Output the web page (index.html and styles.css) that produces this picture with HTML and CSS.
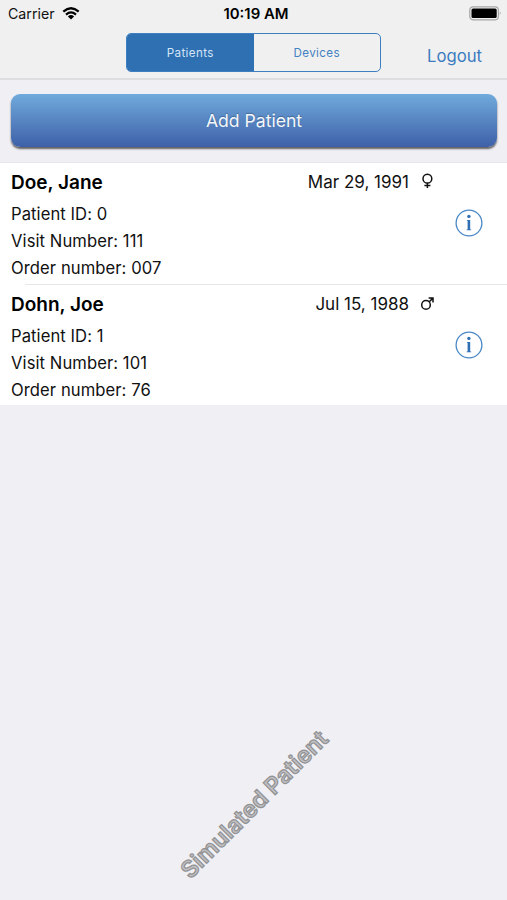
FILE: index.html
```html
<!DOCTYPE html>
<html lang="en">
<head>
    <meta charset="UTF-8">
    <meta name="viewport" content="width=device-width, initial-scale=1.0">
    <title>Patients</title>
    <link rel="stylesheet" href="styles.css">
</head>
<body>

<header class="header">
    <div class="status-bar">
        <div class="carrier">
            <span>Carrier</span>
            <svg class="wifi" viewBox="0 0 18 13" width="18" height="13">
                <path d="M1.3 4.6 Q9 -2.1 16.7 4.6 M4 7.6 Q9 3.3 14 7.6" fill="none" stroke="#000" stroke-width="2.2"/>
                <path d="M5.9 9.4 Q9 6.8 12.1 9.4 L9 12.6 Z"/>
            </svg>
        </div>
        <span class="time">10:19 AM</span>
        <svg class="battery" viewBox="0 0 33 15" width="33" height="15">
            <rect x="0.8" y="0.8" width="28.6" height="13" rx="3.2" fill="none" stroke="#a5a5a5" stroke-width="1.2"/>
            <rect x="2.5" y="2.5" width="25.2" height="9.6" rx="1.6"/>
            <path d="M30.8 5.2 Q32.6 7.3 30.8 9.4 Z" fill="#8a8a8a"/>
        </svg>
    </div>
    <nav class="nav-bar">
        <div class="segments">
            <a class="segment active">Patients</a>
            <a class="segment">Devices</a>
        </div>
        <a class="logout">Logout</a>
    </nav>
</header>

<div class="actions">
    <button class="add-patient">Add Patient</button>
</div>

<ul class="patient-list">
    <li class="patient">
        <div class="details">
            <h2 class="name">Doe, Jane</h2>
            <p>Patient ID: 0</p>
            <p>Visit Number: 111</p>
            <p>Order number: 007</p>
        </div>
        <span class="birthday">Mar 29, 1991</span>
        <svg class="gender" viewBox="0 0 14 16" width="14" height="16">
            <path d="M7.4 10 V15 M4.4 12.6 H10.4" fill="none" stroke="#111" stroke-width="1.5"/>
            <circle cx="7.4" cy="5.7" r="4.4" fill="none" stroke="#111" stroke-width="1.5"/>
        </svg>
        <svg class="info" viewBox="0 0 28 28" width="28" height="28">
            <circle cx="14" cy="14" r="12.9" fill="none" stroke="#4a88c6" stroke-width="1.3"/>
            <circle cx="13.9" cy="7.4" r="1.7" fill="#2f70b5"/>
            <path d="M11.9 10.9 H15.2 V20.4 H16.2 V21.3 H11.6 V20.4 H12.6 V11.8 H11.9 Z" fill="#2f70b5"/>
        </svg>
    </li>
    <li class="patient">
        <div class="details">
            <h2 class="name">Dohn, Joe</h2>
            <p>Patient ID: 1</p>
            <p>Visit Number: 101</p>
            <p>Order number: 76</p>
        </div>
        <span class="birthday">Jul 15, 1988</span>
        <svg class="gender" viewBox="0 0 14 16" width="14" height="16">
            <path d="M9.3 6.7 L12.6 3.4 M8.6 3.1 H13 V7.5" fill="none" stroke="#111" stroke-width="1.5"/>
            <circle cx="6" cy="9.9" r="4.3" fill="none" stroke="#111" stroke-width="1.5"/>
        </svg>
        <svg class="info" viewBox="0 0 28 28" width="28" height="28">
            <circle cx="14" cy="14" r="12.9" fill="none" stroke="#4a88c6" stroke-width="1.3"/>
            <circle cx="13.9" cy="7.4" r="1.7" fill="#2f70b5"/>
            <path d="M11.9 10.9 H15.2 V20.4 H16.2 V21.3 H11.6 V20.4 H12.6 V11.8 H11.9 Z" fill="#2f70b5"/>
        </svg>
    </li>
</ul>

<div class="watermark">Simulated Patient</div>

</body>
</html>
```
FILE: styles.css
```css
* {
    box-sizing: border-box;
}
body {
    position: relative;
    height: 900px;
    margin: 0;
    overflow: hidden;
    font-family: Inter, "Liberation Sans", sans-serif;
    font-size: 16.6px;
    background-color: #efeff4;
    color: #111;
}
.header {
    height: 80px;
    background-color: #f0f0f0;
    border-bottom: 2px solid #dddddf;
}
.status-bar {
    display: grid;
    grid-template-columns: 1fr auto 1fr;
    align-items: center;
    height: 27px;
    padding: 0 5px 0 8px;
}
.carrier {
    display: flex;
    align-items: center;
    gap: 7px;
    font-size: 14.2px;
}
.time {
    padding-left: 2px;
    font-size: 14.9px;
    font-weight: 600;
    color: #000;
}
.battery {
    justify-self: end;
}
.nav-bar {
    display: grid;
    grid-template-columns: 1fr 255px 1fr;
    padding-top: 6px;
}
.segments {
    grid-column: 2;
    display: flex;
    height: 39px;
    border: 1.5px solid #3d7fc1;
    border-radius: 5px;
    overflow: hidden;
}
.segment {
    flex: 1;
    display: flex;
    align-items: center;
    justify-content: center;
    font-size: 11.6px;
    letter-spacing: 0.4px;
    color: #4482c2;
}
.segment.active {
    background-color: #2f70b3;
    color: #d5e5f5;
}
.logout {
    align-self: center;
    justify-self: end;
    padding: 7px 25px 0 0;
    font-size: 16.7px;
    color: #3c7cc0;
}
.actions {
    height: 83px;
    padding: 14px 10px 0 11px;
    border-bottom: 1px solid #e6e6ea;
}
.add-patient {
    display: block;
    width: 100%;
    height: 53px;
    padding: 0;
    border: none;
    border-radius: 9px;
    background: linear-gradient(#70aadc, #3e60a8);
    box-shadow: 0 2px 2px rgba(0, 0, 0, 0.6);
    color: #f3f7fc;
    font-family: inherit;
    font-size: 17.6px;
    text-shadow: 0 -1px 1px rgba(0, 0, 0, 0.25);
}
.patient-list {
    margin: 0;
    padding: 0;
    list-style: none;
    background-color: #fff;
}
.patient {
    display: grid;
    grid-template-columns: 1fr auto 35px 28px;
    height: 121px;
    padding: 5px 24px 0 11px;
}
.patient + .patient {
    padding-top: 6px;
    background: linear-gradient(#e6e6e8, #e6e6e8) 25px 0 / 100% 1px no-repeat;
}
.details p {
    margin: 0;
    line-height: 27px;
    letter-spacing: 0.08px;
}
.name {
    margin: 0 0 4px;
    padding-top: 1px;
    font-size: 19px;
    font-weight: 600;
    line-height: 28px;
    color: #000;
}
.birthday {
    margin-right: 11px;
    font-size: 17px;
    line-height: 28px;
}
.gender {
    margin-top: 5px;
}
.info {
    margin-top: 41px;
}
.watermark {
    position: absolute;
    left: 254px;
    top: 804px;
    font-size: 23.3px;
    font-weight: 600;
    white-space: nowrap;
    color: #c0c0c3;
    -webkit-text-stroke: 1.2px #929294;
    transform: translate(-50%, -50%) rotate(-45deg);
}
```
